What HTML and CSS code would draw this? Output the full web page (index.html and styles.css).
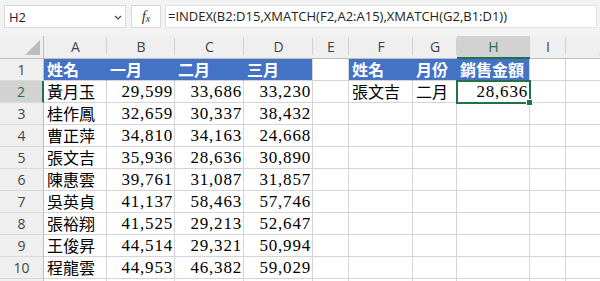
FILE: index.html
```html
<!DOCTYPE html>
<html>
<head>
<meta charset="utf-8">
<link rel="stylesheet" href="styles.css">
</head>
<body>
<div class="topbar">
  <div class="namebox"><span>H2</span>
    <svg class="chev" width="8" height="5" viewBox="0 0 8 5"><path d="M1 1 L4 4 L7 1" fill="none" stroke="#444" stroke-width="1.2"/></svg>
  </div>
  <div class="fxbox"><span class="fx"><i>f</i><sub>x</sub></span></div>
  <div class="formula">=INDEX(B2:D15,XMATCH(F2,A2:A15),XMATCH(G2,B1:D1))</div>
</div>
<div class="sheet">
  <div class="corner"><div class="tri"></div></div>
  <div class="ch">A</div><div class="ch">B</div><div class="ch">C</div><div class="ch">D</div><div class="ch">E</div><div class="ch">F</div><div class="ch">G</div><div class="ch sel">H</div><div class="ch">I</div><div class="ch">J</div>

  <div class="rh">1</div>
  <div class="c hd">姓名</div><div class="c hd">一月</div><div class="c hd">二月</div><div class="c hd last">三月</div><div class="c"></div><div class="c hd">姓名</div><div class="c hd">月份</div><div class="c hd last">銷售金額</div><div class="c"></div><div class="c"></div>

  <div class="rh sel">2</div>
  <div class="c t">黃月玉</div><div class="c n">29,599</div><div class="c n">33,686</div><div class="c n">33,230</div><div class="c"></div><div class="c t">張文吉</div><div class="c t">二月</div><div class="c n active">28,636<span class="handle"></span></div><div class="c"></div><div class="c"></div>

  <div class="rh">3</div>
  <div class="c t">桂作鳳</div><div class="c n">32,659</div><div class="c n">30,337</div><div class="c n">38,432</div><div class="c"></div><div class="c"></div><div class="c"></div><div class="c"></div><div class="c"></div><div class="c"></div>

  <div class="rh">4</div>
  <div class="c t">曹正萍</div><div class="c n">34,810</div><div class="c n">34,163</div><div class="c n">24,668</div><div class="c"></div><div class="c"></div><div class="c"></div><div class="c"></div><div class="c"></div><div class="c"></div>

  <div class="rh">5</div>
  <div class="c t">張文吉</div><div class="c n">35,936</div><div class="c n">28,636</div><div class="c n">30,890</div><div class="c"></div><div class="c"></div><div class="c"></div><div class="c"></div><div class="c"></div><div class="c"></div>

  <div class="rh">6</div>
  <div class="c t">陳惠雲</div><div class="c n">39,761</div><div class="c n">31,087</div><div class="c n">31,857</div><div class="c"></div><div class="c"></div><div class="c"></div><div class="c"></div><div class="c"></div><div class="c"></div>

  <div class="rh">7</div>
  <div class="c t">吳英貞</div><div class="c n">41,137</div><div class="c n">58,463</div><div class="c n">57,746</div><div class="c"></div><div class="c"></div><div class="c"></div><div class="c"></div><div class="c"></div><div class="c"></div>

  <div class="rh">8</div>
  <div class="c t">張裕翔</div><div class="c n">41,525</div><div class="c n">29,213</div><div class="c n">52,647</div><div class="c"></div><div class="c"></div><div class="c"></div><div class="c"></div><div class="c"></div><div class="c"></div>

  <div class="rh">9</div>
  <div class="c t">王俊昇</div><div class="c n">44,514</div><div class="c n">29,321</div><div class="c n">50,994</div><div class="c"></div><div class="c"></div><div class="c"></div><div class="c"></div><div class="c"></div><div class="c"></div>

  <div class="rh">10</div>
  <div class="c t">程龍雲</div><div class="c n">44,953</div><div class="c n">46,382</div><div class="c n">59,029</div><div class="c"></div><div class="c"></div><div class="c"></div><div class="c"></div><div class="c"></div><div class="c"></div>

  <div class="rh"></div>
  <div class="c"></div><div class="c"></div><div class="c"></div><div class="c"></div><div class="c"></div><div class="c"></div><div class="c"></div><div class="c"></div><div class="c"></div><div class="c"></div>
</div>
</body>
</html>
```
FILE: styles.css
```css
html, body {
  margin: 0;
  padding: 0;
}
body {
  width: 600px;
  height: 281px;
  overflow: hidden;
  background: #ffffff;
  font-family: "Open Sans", "Noto Sans", sans-serif;
}
.topbar {
  height: 36px;
  box-sizing: border-box;
  background: #f3f3f3;
  display: flex;
  align-items: flex-start;
  padding: 5px 3px 0 4px;
}
.namebox {
  width: 122px;
  height: 23px;
  box-sizing: border-box;
  background: #fff;
  border: 1px solid #dadada;
  display: flex;
  align-items: center;
  justify-content: space-between;
  padding: 0 3px 0 4px;
  font-size: 13px;
  color: #222;
}
.chev { margin-top: 1px; }
.fxbox {
  margin-left: 5px;
  width: 30px;
  height: 23px;
  box-sizing: border-box;
  background: #fff;
  border: 1px solid #dadada;
  display: flex;
  align-items: center;
  justify-content: center;
}
.fx {
  font-family: "Liberation Serif", serif;
  font-size: 15px;
  color: #333;
  line-height: 1;
}
.fx sub { font-size: 10px; font-style: italic; vertical-align: -1px; }
.formula {
  margin-left: 4px;
  flex: 1;
  height: 23px;
  box-sizing: border-box;
  background: #fff;
  border: 1px solid #e2e2e2;
  font-size: 13px;
  line-height: 21px;
  padding-left: 2px;
  color: #222;
  white-space: nowrap;
  overflow: hidden;
}
.sheet {
  width: 640px;
  display: grid;
  grid-template-columns: 44px 63px 68px 69px 69px 36px 64px 44px 73px 36px 74px;
  grid-template-rows: 23px repeat(11, 22px);
}
.corner {
  background: #efefef;
  border-right: 1px solid #bdbdbd;
  border-bottom: 1px solid #bdbdbd;
  box-sizing: border-box;
  display: flex;
  align-items: flex-end;
  justify-content: flex-end;
  padding: 0 3px 3px 0;
}
.tri {
  width: 0;
  height: 0;
  border-left: 15px solid transparent;
  border-bottom: 15px solid #bdbdbd;
}
.ch {
  position: relative;
  background: #efefef;
  border-bottom: 1px solid #bdbdbd;
  box-sizing: border-box;
  text-align: center;
  font-size: 14px;
  line-height: 22px;
  color: #444;
}
.ch::after {
  content: "";
  position: absolute;
  right: 0;
  top: 2px;
  height: 17px;
  width: 1px;
  background: #d0d0d0;
}
.ch.sel {
  background: #d2d2d2;
  color: #217346;
  border-bottom: 2px solid #217346;
}
.rh {
  background: #efefef;
  border-right: 1px solid #bdbdbd;
  border-bottom: 1px solid #dadada;
  box-sizing: border-box;
  text-align: center;
  font-size: 14px;
  line-height: 21px;
  color: #444;
}
.rh.sel {
  background: #d2d2d2;
  color: #217346;
  border-right: 2px solid #217346;
}
.c {
  position: relative;
  border-right: 1px solid #d4d4d4;
  border-bottom: 1px solid #d4d4d4;
  box-sizing: border-box;
  font-size: 16px;
  line-height: 21px;
  color: #000;
  white-space: nowrap;
}
.hd {
  background: #4472c4;
  border-right-color: #4472c4;
  color: #fff;
  font-family: "Noto Sans CJK TC", sans-serif;
  font-weight: 700;
  padding-left: 3px;
}
.hd.last { border-right-color: #d4d4d4; }
.t {
  font-family: "Noto Sans CJK TC", sans-serif;
  padding-left: 3px;
}
.n {
  font-family: "Liberation Serif", serif;
  font-size: 17px;
  letter-spacing: 0.8px;
  text-align: right;
  padding-right: 1px;
}
.active {
  outline: 2px solid #217346;
  outline-offset: -1px;
  z-index: 1;
}
.handle {
  position: absolute;
  right: -4px;
  bottom: -4px;
  width: 5px;
  height: 5px;
  background: #217346;
  border: 1px solid #fff;
}
```
